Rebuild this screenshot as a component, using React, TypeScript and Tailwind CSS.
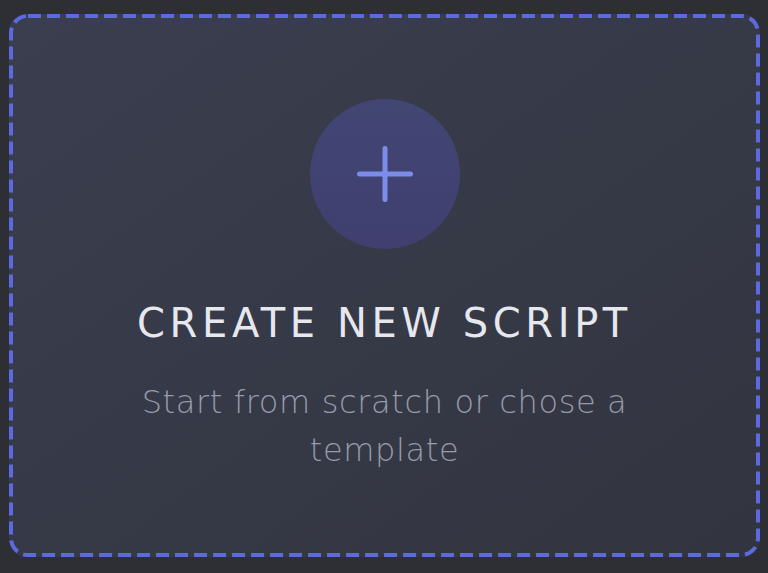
import React from "react";

export default function App() {
  return (
    <div className="h-[573px] w-[768px] bg-[#2d2f35] pt-[14px] pl-[9px] pr-[8px] pb-[16px]">
      <div className="relative flex h-full flex-col items-center rounded-[18px] bg-gradient-to-br from-[#3a3e4f] to-[#32353f] pt-[85px]">
        <svg className="pointer-events-none absolute inset-0" width="751" height="543" viewBox="0 0 751 543" fill="none">
          <rect x="2" y="2" width="747" height="539" rx="17" stroke="#5b6ae0" strokeWidth="4" strokeDasharray="13 6" />
        </svg>
        <div className="flex h-[150px] w-[150px] items-center justify-center rounded-full bg-gradient-to-b from-[#424673] to-[#403f70]">
          <svg width="56" height="56" viewBox="0 0 56 56" fill="none">
            <path d="M28 2.5v51M2.5 28h51" stroke="#7b8de8" strokeWidth="5" strokeLinecap="round" />
          </svg>
        </div>
        <div
          className="mt-[50px] text-[40px] leading-[48px] tracking-[0.115em] text-[#e6e8ee]"
          style={{ fontFamily: '"DejaVu Sans", sans-serif' }}
        >
          CREATE NEW SCRIPT
        </div>
        <div
          className="mt-[31px] max-w-[540px] text-center text-[32px] font-extralight leading-[48px] tracking-[0.02em] text-[#979bab]"
          style={{ fontFamily: '"DejaVu Sans", sans-serif' }}
        >
          Start from scratch or chose a template
        </div>
      </div>
    </div>
  );
}
